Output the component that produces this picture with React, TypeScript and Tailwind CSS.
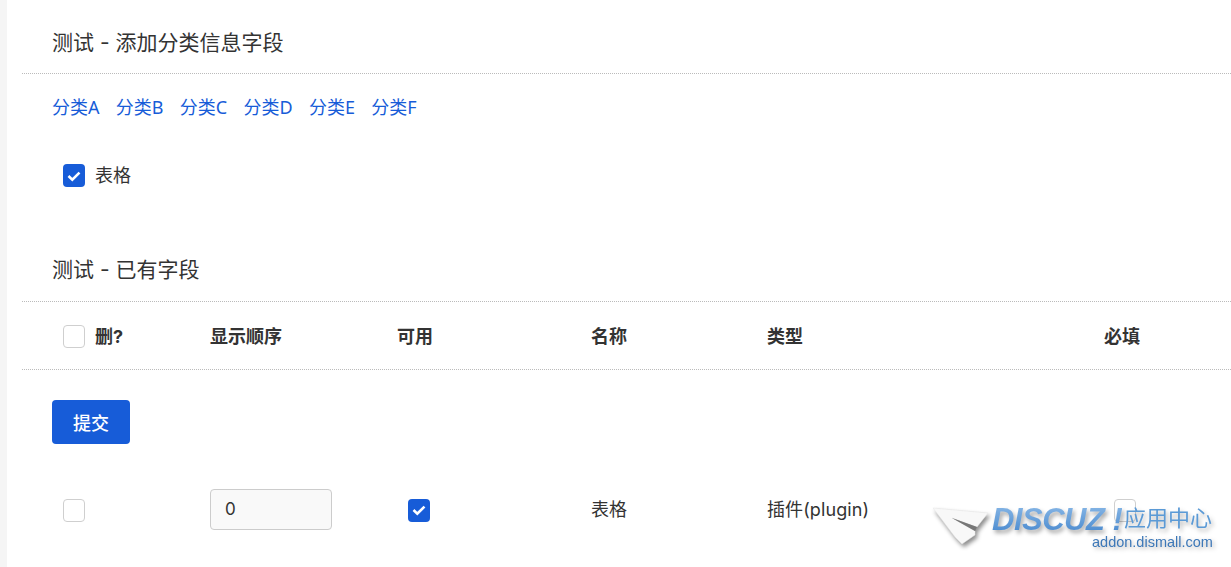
const font = 'font-["Inter","Noto_Sans_CJK_SC",sans-serif]'

function Box({ checked = false }: { checked?: boolean }) {
  if (checked) {
    return (
      <span className="flex h-[23px] w-[22px] shrink-0 items-center justify-center rounded bg-[#175cd8]">
        <svg width="22" height="22" viewBox="0 0 22 22" fill="none">
          <path d="M5.5 11 9.3 14.6 16.5 7.6" stroke="#fff" strokeWidth="2.6" />
        </svg>
      </span>
    )
  }
  return <span className="block h-[23px] w-[22px] shrink-0 rounded border border-[#cfcfcf] bg-white" />
}

const links = ['分类A', '分类B', '分类C', '分类D', '分类E', '分类F']
const cols = 'grid grid-cols-[188px_187px_194px_176px_337px_1fr] items-center'

function Watermark() {
  return (
    <div className="pointer-events-none absolute left-[933px] top-[505px] h-[50px] w-[290px]">
      {/* paper plane */}
      <svg className="absolute left-0 top-[2px] drop-shadow-[2px_3px_2px_rgba(0,0,0,0.45)]" width="56" height="40" viewBox="0 0 56 40">
        <path d="M0 1 55 6 44 20 19 11 42 24 42 28 29 37 22 30Z" fill="#f8f8f8" stroke="#e4e4e4" strokeWidth="0.5" />
        <path d="M19 11 44 20 42 24Z" fill="#777" />
      </svg>
      <span className="absolute left-[59px] top-[-3px] bg-gradient-to-b from-[#8dbbe8] to-[#3f83cb] bg-clip-text text-[31px] font-bold italic leading-[36px] tracking-[-0.5px] text-transparent drop-shadow-[2px_3px_2px_rgba(0,0,0,0.35)] font-['Liberation_Sans',sans-serif]">
        DISCUZ !
      </span>
      <span className="absolute left-[191px] top-[-3px] text-[22px] leading-[28px] text-[#5b9ad6] drop-shadow-[2px_3px_2px_rgba(0,0,0,0.3)] font-['Noto_Sans_CJK_SC',sans-serif]">
        应用中心
      </span>
      <span className="absolute left-[159px] top-[27px] text-[14.5px] leading-[20px] text-[#3d78b8] drop-shadow-[2px_2px_2px_rgba(0,0,0,0.3)] font-['Liberation_Sans',sans-serif]">
        addon.dismall.com
      </span>
    </div>
  )
}

export default function App() {
  return (
    <div className={`relative h-[567px] overflow-hidden bg-white pl-[7px] text-[#333] ${font}`}>
      <div className="absolute inset-y-0 left-0 w-[7px] bg-[#f5f5f5]" />
      <div className="pl-[15px]">
        {/* add field */}
        <h2 className="h-[74px] border-b border-dotted border-[#bbb] pl-[30px] pt-[28px] text-[21px] leading-[30px] font-normal">
          测试 - 添加分类信息字段
        </h2>
        <div className="flex gap-[16.3px] pl-[30px] pt-[20px] font-['Noto_Sans','Noto_Sans_CJK_SC',sans-serif] text-[18px] leading-[27px] text-[#175cd8]">
          {links.map(l => (
            <a key={l}>{l}</a>
          ))}
        </div>
        <label className="mt-[41px] flex items-center gap-[10px] pl-[41px] text-[18px] leading-[27px]">
          <Box checked />
          表格
        </label>

        {/* existing fields */}
        <h2 className="mt-[51px] h-[62px] border-b border-dotted border-[#bbb] pl-[30px] pt-[15px] text-[21px] leading-[30px] font-normal">
          测试 - 已有字段
        </h2>
        <div className={`${cols} h-[68px] border-b border-dotted border-[#bbb] pt-[1px] text-[18px] font-bold`}>
          <div className="flex items-center gap-[10px] pl-[41px]">
            <Box />
            删?
          </div>
          <div>显示顺序</div>
          <div>可用</div>
          <div>名称</div>
          <div>类型</div>
          <div>必填</div>
        </div>
        <div className="pl-[30px] pt-[30px]">
          <button className="h-[44px] w-[78px] rounded bg-[#175cd8] pt-[2px] text-[18px] font-medium text-white">提交</button>
        </div>
        <div className={`${cols} mt-[45px] h-[41px] text-[18px]`}>
          <div className="pl-[41px] pt-[1px]">
            <Box />
          </div>
          <div>
            <div className="flex h-[41px] w-[122px] items-center rounded border border-[#ccc] bg-[#f9f9f9] pl-[14px] text-[17px]">0</div>
          </div>
          <div className="pl-[11px] pt-[1px]">
            <Box checked />
          </div>
          <div>表格</div>
          <div className="tracking-[0.1px]">插件(plugin)</div>
          <div className="pl-[10px] pt-[1px]">
            <Box />
          </div>
        </div>
      </div>
      <Watermark />
    </div>
  )
}
